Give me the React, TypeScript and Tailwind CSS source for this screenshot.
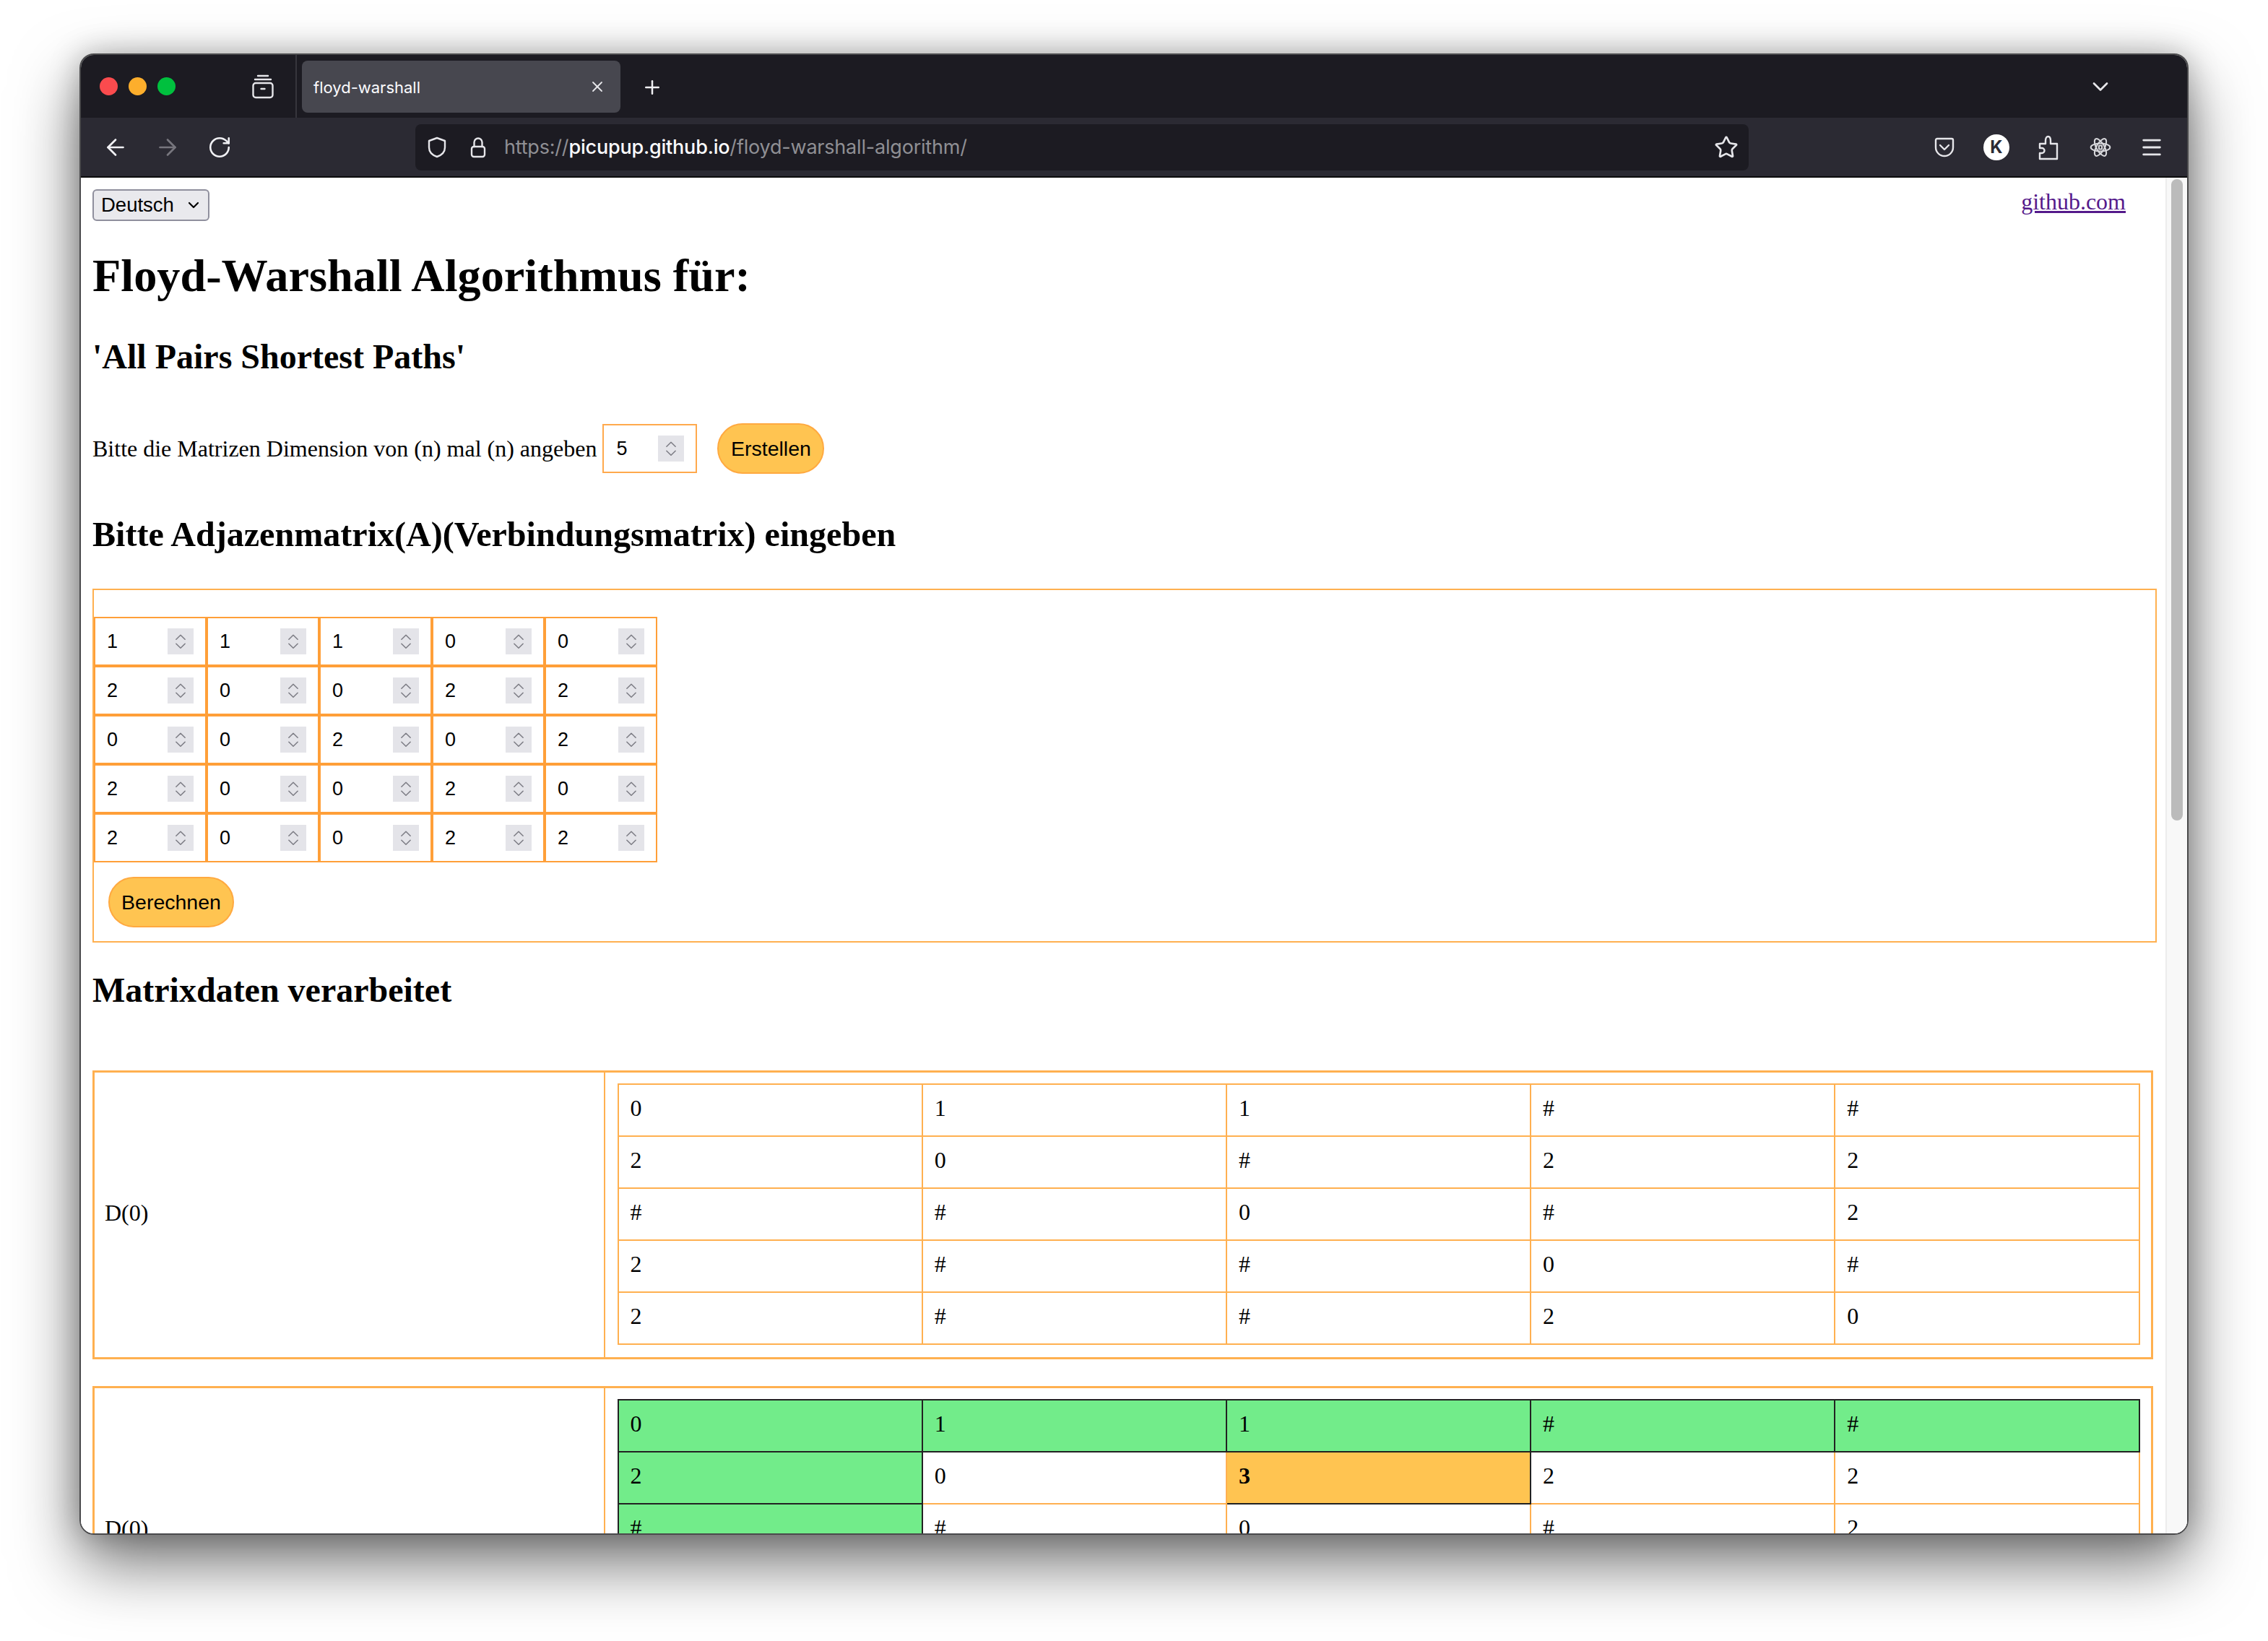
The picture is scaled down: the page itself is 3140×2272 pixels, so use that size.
import React from "react";
import { ArrowLeft, ArrowRight, RotateCw, Star, X, Plus, ChevronDown, ChevronUp, Menu } from "lucide-react";

const adj = [
  [1, 1, 1, 0, 0],
  [2, 0, 0, 2, 2],
  [0, 0, 2, 0, 2],
  [2, 0, 0, 2, 0],
  [2, 0, 0, 2, 2],
];
const d0 = [
  ["0", "1", "1", "#", "#"],
  ["2", "0", "#", "2", "2"],
  ["#", "#", "0", "#", "2"],
  ["2", "#", "#", "0", "#"],
  ["2", "#", "#", "2", "0"],
];
const d1 = [
  ["0", "1", "1", "#", "#"],
  ["2", "0", "3", "2", "2"],
  ["#", "#", "0", "#", "2"],
  ["2", "#", "3", "0", "#"],
  ["2", "#", "3", "2", "0"],
];

function Spinner() {
  return (
    <div className="flex h-[36px] w-[36px] flex-col items-center justify-center bg-[#e4e4e9] text-[#7d7d85]">
      <ChevronUp size={28} strokeWidth={1.5} className="-mb-[6.5px]" />
      <ChevronDown size={28} strokeWidth={1.5} className="-mt-[6.5px]" />
    </div>
  );
}

function NumCell({ v }: { v: number }) {
  return (
    <div className="flex h-[68px] w-[156px] items-center justify-between border-2 border-[#ff9f38] pl-[16px] pr-[16px] font-['Liberation_Sans',sans-serif] text-[27px] text-black">
      <span>{v}</span>
      <Spinner />
    </div>
  );
}

function MatrixTable({ rows, highlight }: { rows: string[][]; highlight?: boolean }) {
  return (
    <table className="w-[2108px] table-fixed border-collapse">
      <tbody>
        {rows.map((r, i) => (
          <tr key={i}>
            {r.map((c, j) => {
              const green = highlight && (i === 0 || j === 0);
              const hot = highlight && i === 1 && j === 2;
              const cls = hot
                ? "h-[72px] border-2 border-[#222] bg-[#ffc451] pb-[6px] pl-[16px] font-bold"
                : green
                ? "h-[72px] border-2 border-[#222] bg-[#72ec8a] pb-[6px] pl-[16px]"
                : "h-[72px] border-2 border-[#ffb050] bg-white pb-[6px] pl-[16px]";
              return (
                <td key={j} className={cls}>
                  {c}
                </td>
              );
            })}
          </tr>
        ))}
      </tbody>
    </table>
  );
}

function Result({ rows, highlight, className }: { rows: string[][]; highlight?: boolean; className?: string }) {
  return (
    <table className={"w-[2853px] table-fixed border-collapse border-[3px] border-[#ffb050] " + (className || "")}>
      <tbody>
        <tr>
          <td className="w-[707px] border-r-2 border-[#ffb050] pb-[6px] pl-[14px]">D(0)</td>
          <td className="pb-[17px] pl-[17px] pr-[17px] pt-[15px]">
            <MatrixTable rows={rows} highlight={highlight} />
          </td>
        </tr>
      </tbody>
    </table>
  );
}

function Chrome({ children, w = 32, h = 32 }: { children: React.ReactNode; w?: number; h?: number }) {
  return (
    <svg width={w} height={h} viewBox={`0 0 ${w} ${h}`} fill="none" stroke="#e6e6ea" strokeWidth={2.4} strokeLinecap="round" strokeLinejoin="round" className="shrink-0">
      {children}
    </svg>
  );
}

export default function App() {
  return (
    <div className="h-[2272px] w-[3140px] overflow-hidden bg-white pl-[110px] pt-[74px]">
      <div className="flex h-[2051px] w-[2920px] flex-col overflow-hidden rounded-[20px] border-2 border-[#4a4a4c] shadow-[0_40px_90px_rgba(0,0,0,0.55),0_0_40px_rgba(0,0,0,0.25)]">
        {/* tab strip */}
        <div className="flex h-[87px] shrink-0 items-center bg-[#1c1b22] pl-[26px] font-['Inter',sans-serif]">
          <div className="h-[25px] w-[25px] rounded-full bg-[#fb4b4e]" />
          <div className="ml-[15px] h-[25px] w-[25px] rounded-full bg-[#fdae2c]" />
          <div className="ml-[15px] h-[25px] w-[25px] rounded-full bg-[#00c03e]" />
          <div className="ml-[105px]">
            <Chrome w={32} h={34}>
              <path d="M9 2h14M5 7h22" />
              <rect x="2.5" y="12" width="27" height="20" rx="3.5" />
              <path d="M13.5 20h5" />
            </Chrome>
          </div>
          <div className="ml-[29px] h-full w-[2px] bg-[#36353c]" />
          <div className="ml-[7px] flex h-[72px] w-[441px] items-center justify-between rounded-[8px] bg-[#47474f] pl-[16px] pr-[20px]">
            <span className="mt-[3px] text-[22px] text-[#fbfbfe]">floyd-warshall</span>
            <X size={24} strokeWidth={1.8} className="text-[#e6e6ea]" />
          </div>
          <Plus size={30} strokeWidth={2} className="ml-[29px] mt-[2px] text-[#f0f0f4]" />
          <ChevronDown size={36} strokeWidth={1.8} className="ml-auto mr-[102px] text-[#e6e6ea]" />
        </div>
        {/* toolbar */}
        <div className="flex h-[83px] shrink-0 items-center border-b-2 border-[#0c0c0d] bg-[#2b2a33] pl-[30px] font-['Inter',sans-serif]">
          <ArrowLeft size={36} strokeWidth={1.8} className="text-[#f0f0f4]" />
          <ArrowRight size={36} strokeWidth={1.8} className="ml-[36px] text-[#77767e]" />
          <RotateCw size={34} strokeWidth={1.8} className="ml-[37px] text-[#f0f0f4]" />
          <div className="ml-[254px] flex h-[64px] w-[1846px] items-center rounded-[8px] bg-[#1c1b22] pl-[14px] pr-[14px]">
            <Chrome>
              <path d="M16 3l11 4v9c0 7-5 11-11 13C10 27 5 23 5 16V7z" />
            </Chrome>
            <div className="ml-[25px]">
              <Chrome>
                <rect x="7" y="15" width="18" height="14" rx="3" />
                <path d="M10.5 15V9a5.5 5.5 0 0 1 11 0v6" />
              </Chrome>
            </div>
            <div className="ml-[20px] mt-[2px] whitespace-nowrap text-[27px] tracking-[-0.2px] text-[#8f8f94]">
              https://<span className="font-medium text-[#fbfbfe]">picupup.github.io</span>/floyd-warshall-algorithm/
            </div>
            <Star size={34} strokeWidth={1.9} className="ml-auto text-[#e6e6ea]" />
          </div>
          <div className="ml-[253px] flex items-center gap-[36px]">
            <div className="flex h-[36px] w-[36px] items-center justify-center">
              <svg width="32" height="32" viewBox="0 0 32 32" fill="none" stroke="#e6e6ea" strokeWidth="2.4" strokeLinecap="round" strokeLinejoin="round">
                <path d="M6 4h20a2 2 0 0 1 2 2v10a12 12 0 0 1-24 0V6a2 2 0 0 1 2-2z" />
                <path d="M10 13l6 6 6-6" />
              </svg>
            </div>
            <div className="flex h-[36px] w-[36px] items-center justify-center rounded-full bg-white text-[24px] font-bold leading-none text-[#2b2a33]">K</div>
            <div className="flex h-[36px] w-[36px] items-center justify-center">
              <svg width="32" height="36" viewBox="0 0 32 36" fill="none" stroke="#e6e6ea" strokeWidth="2.4" strokeLinejoin="round">
                <path d="M4 34V26h3a3.5 3.5 0 0 0 0-7H4v-6h8V9c0-8 7-8 7 0v4h9v21z" />
              </svg>
            </div>
            <div className="flex h-[36px] w-[36px] items-center justify-center">
              <svg width="30" height="30" viewBox="0 0 36 36" fill="none" stroke="#d8d8dc" strokeWidth="2.4">
                <ellipse cx="18" cy="18" rx="16" ry="6.5" transform="rotate(60 18 18)" />
                <ellipse cx="18" cy="18" rx="16" ry="6.5" transform="rotate(120 18 18)" />
                <ellipse cx="18" cy="18" rx="16" ry="6.5" />
                <rect x="15.5" y="15" width="5" height="6" rx="1" />
              </svg>
            </div>
            <Menu size={34} strokeWidth={2} className="text-[#e6e6ea]" />
          </div>
        </div>
        {/* page */}
        <div className="flex min-h-0 flex-1 bg-white">
          <div className="min-w-0 flex-1 overflow-hidden pl-[16px] pt-[16px] font-['Liberation_Serif',serif] text-[32px] text-black">
            <div className="flex items-start justify-between pr-[55px]">
              <div className="flex h-[44px] w-[162px] items-center justify-between rounded-[6px] border-2 border-[#8f8f9d] bg-[#e9e9ed] pl-[10px] pr-[8px] font-['Liberation_Sans',sans-serif] text-[27.5px]">
                <span>Deutsch</span>
                <ChevronDown size={24} strokeWidth={2.2} />
              </div>
              <a className="text-[32px] leading-[34px] text-[#551a8b] underline">github.com</a>
            </div>
            <h1 className="mt-[40px] text-[64.3px] font-bold leading-[72px]">Floyd-Warshall Algorithmus für:</h1>
            <h2 className="mt-[52px] text-[48px] font-bold leading-[48px]">'All Pairs Shortest Paths'</h2>
            <div className="mt-[68px] flex items-center">
              <span>Bitte die Matrizen Dimension von (n) mal (n) angeben</span>
              <div className="ml-[8px] flex h-[68px] w-[131px] items-center justify-between border-2 border-[#ffa94d] pl-[17px] pr-[16px] font-['Liberation_Sans',sans-serif] text-[27px]">
                <span>5</span>
                <Spinner />
              </div>
              <button className="ml-[28px] h-[70px] w-[148px] rounded-full border-2 border-[#ffa940] bg-[#ffc451] font-['Liberation_Sans',sans-serif] text-[28.5px]">Erstellen</button>
            </div>
            <h2 className="mt-[56px] text-[48.1px] font-bold leading-[56px]">Bitte Adjazenmatrix(A)(Verbindungsmatrix) eingeben</h2>
            <div className="mt-[47px] h-[490px] w-[2858px] border-2 border-[#ffb050] pt-[37px]">
              <div className="grid w-[780px] grid-cols-5">
                {adj.flat().map((v, i) => (
                  <NumCell key={i} v={v} />
                ))}
              </div>
              <button className="ml-[20px] mt-[20px] h-[70px] w-[174px] rounded-full border-2 border-[#ffa940] bg-[#ffc451] font-['Liberation_Sans',sans-serif] text-[28.5px]">Berechnen</button>
            </div>
            <h2 className="mt-[38px] text-[48px] font-bold leading-[56px]">Matrixdaten verarbeitet</h2>
            <Result rows={d0} className="mt-[83px]" />
            <Result rows={d1} highlight className="mt-[37px]" />
          </div>
          <div className="w-[30px] shrink-0 border-l-2 border-[#ececec] bg-[#f8f8f8] pl-[6px] pt-[2px]">
            <div className="h-[888px] w-[16px] rounded-full bg-[#bbbbbb]" />
          </div>
        </div>
      </div>
    </div>
  );
}
